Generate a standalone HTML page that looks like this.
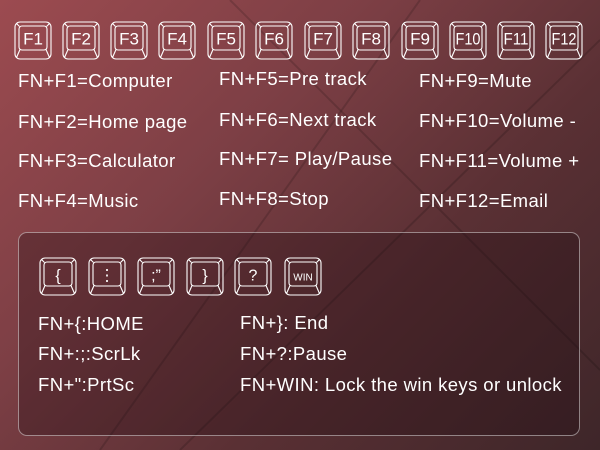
<!DOCTYPE html>
<html><head><meta charset="utf-8"><style>
body{margin:0;width:600px;height:450px;overflow:hidden;position:relative;font-family:"Liberation Sans",sans-serif;color:#fff;
background:linear-gradient(135deg,#9c4b50 0%,#7d3f45 35%,#5a3034 65%,#3e2629 100%);}
.t{position:absolute;font-size:18.5px;letter-spacing:0.4px;white-space:nowrap;line-height:20px}
.box{position:absolute;left:18px;top:232px;width:560px;height:202px;border:1.5px solid rgba(255,255,255,0.45);border-radius:9px;background:rgba(30,10,15,0.3)}
svg{position:absolute;left:0;top:0}
</style></head><body>
<svg width="600" height="450">
<g stroke="rgba(0,0,0,0.15)" stroke-width="2" fill="none"><line x1="230" y1="0" x2="600" y2="370"/><line x1="600" y1="40" x2="180" y2="450"/><line x1="100" y1="450" x2="420" y2="0"/></g>
</svg>
<div class="box"></div>
<svg width="600" height="450" id="k"></svg>
<script>
var s='',xs=[15,63,111,159,208,256,305,353,402,450,498,546],lb=['F1','F2','F3','F4','F5','F6','F7','F8','F9','F10','F11','F12'];
function key(x,y,l,fs){var w=36,h=37;
s+='<g fill="none" stroke="#fff" stroke-width="1.1"><rect x="'+x+'" y="'+y+'" width="'+w+'" height="'+h+'" rx="5"/><rect x="'+(x+4)+'" y="'+(y+4)+'" width="'+(w-8)+'" height="'+(h-13)+'" rx="3"/>'+
'<path d="M'+(x+1.5)+' '+(y+1.5)+'L'+(x+4.5)+' '+(y+4.5)+'M'+(x+w-1.5)+' '+(y+1.5)+'L'+(x+w-4.5)+' '+(y+4.5)+'M'+(x+1.5)+' '+(y+h-1.5)+'L'+(x+5)+' '+(y+h-9.5)+'M'+(x+w-1.5)+' '+(y+h-1.5)+'L'+(x+w-5)+' '+(y+h-9.5)+'"/></g>'+
'<text x="'+(x+w/2)+'" y="'+(y+22.5)+'" fill="#fff" font-family="Liberation Sans" font-size="'+fs+'" text-anchor="middle"'+(l.length>2&&l!='WIN'?' textLength="25" lengthAdjust="spacingAndGlyphs"':'')+'>'+l+'</text>';}
for(var i=0;i<12;i++)key(xs[i],22,lb[i],17);
var bx=[40,89,138,187,235,285],bl=['{','⋮',';\u201D','}','?','WIN'];
for(i=0;i<6;i++)key(bx[i],258,bl[i],i==5?10:16);
document.getElementById('k').innerHTML=s;
</script>
<div class="t" style="left:18px;top:71px">FN+F1=Computer</div>
<div class="t" style="left:18px;top:112px">FN+F2=Home page</div>
<div class="t" style="left:18px;top:151px">FN+F3=Calculator</div>
<div class="t" style="left:18px;top:191px">FN+F4=Music</div>
<div class="t" style="left:219px;top:69px">FN+F5=Pre track</div>
<div class="t" style="left:219px;top:110px">FN+F6=Next track</div>
<div class="t" style="left:219px;top:149px">FN+F7= Play/Pause</div>
<div class="t" style="left:219px;top:189px">FN+F8=Stop</div>
<div class="t" style="left:419px;top:71px">FN+F9=Mute</div>
<div class="t" style="left:419px;top:111px">FN+F10=Volume -</div>
<div class="t" style="left:419px;top:151px">FN+F11=Volume +</div>
<div class="t" style="left:419px;top:191px">FN+F12=Email</div>
<div class="t" style="left:38px;top:314px">FN+{:HOME</div>
<div class="t" style="left:38px;top:344px">FN+:;:ScrLk</div>
<div class="t" style="left:38px;top:375px">FN+":PrtSc</div>
<div class="t" style="left:240px;top:313px">FN+}: End</div>
<div class="t" style="left:240px;top:344px">FN+?:Pause</div>
<div class="t" style="left:240px;top:375px">FN+WIN: Lock the win keys or unlock</div>
</body></html>
